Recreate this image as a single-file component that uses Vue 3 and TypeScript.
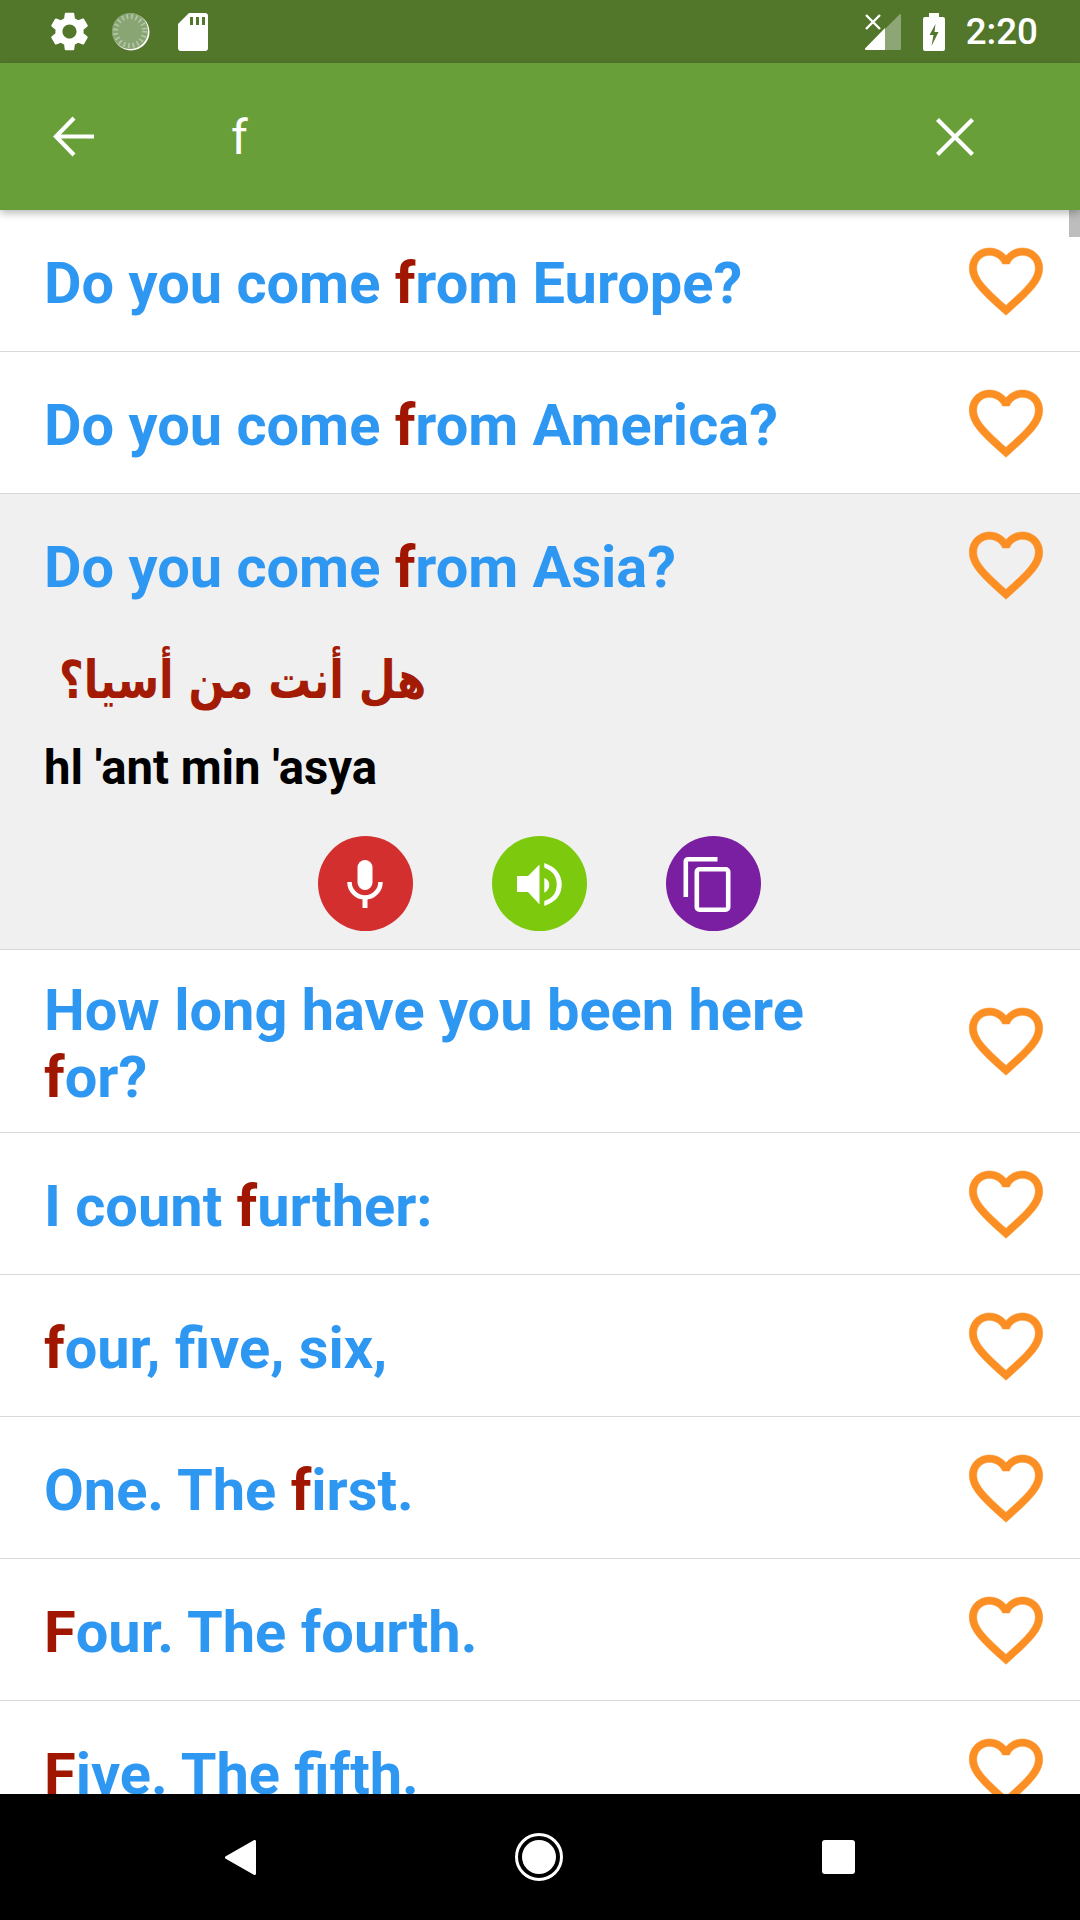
<script setup lang="ts">
interface Phrase { text: string; expanded?: boolean }
const phrases: Phrase[] = [
  { text: 'Do you come from Europe?' },
  { text: 'Do you come from America?' },
  { text: 'Do you come from Asia?', expanded: true },
  { text: 'How long have you been here for?' },
  { text: 'I count further:' },
  { text: 'four, five, six,' },
  { text: 'One. The first.' },
  { text: 'Four. The fourth.' },
  { text: 'Five. The fifth.' },
]
const query = 'f'
function split(t: string): [string, string, string] {
  const i = t.toLowerCase().indexOf(query)
  return [t.slice(0, i), t.slice(i, i + 1), t.slice(i + 1)]
}
const heart = 'M16.5 3c-1.74 0-3.41.81-4.5 2.09C10.91 3.81 9.24 3 7.5 3 4.42 3 2 5.42 2 8.5c0 3.78 3.4 6.86 8.55 11.54L12 21.35l1.45-1.32C18.6 15.36 22 12.28 22 8.5 22 5.42 19.58 3 16.5 3zm-4.4 15.55l-.1.1-.1-.1C7.14 14.24 4 11.39 4 8.5 4 6.5 5.5 5 7.5 5c1.54 0 3.04.99 3.57 2.36h1.87C13.46 5.99 14.96 5 16.5 5c2 0 3.5 1.5 3.5 3.5 0 2.89-3.14 5.74-7.9 10.05z'
</script>

<template>
  <div class="screen">
    <header class="status">
      <svg class="st gear" viewBox="0 0 24 24"><path fill="#fff" d="M19.14 12.94c.04-.3.06-.61.06-.94s-.02-.64-.07-.94l2.03-1.58a.49.49 0 0 0 .12-.61l-1.92-3.32a.488.488 0 0 0-.59-.22l-2.39.96c-.5-.38-1.03-.7-1.62-.94l-.36-2.54a.484.484 0 0 0-.48-.41h-3.84c-.24 0-.43.17-.47.41l-.36 2.54c-.59.24-1.13.57-1.62.94l-2.39-.96c-.22-.08-.47 0-.59.22L2.74 8.87c-.12.21-.08.47.12.61l2.03 1.58c-.05.3-.09.63-.09.94s.02.64.07.94l-2.03 1.58a.49.49 0 0 0-.12.61l1.92 3.32c.12.22.37.29.59.22l2.39-.96c.5.38 1.03.7 1.62.94l.36 2.54c.05.24.24.41.48.41h3.84c.24 0 .44-.17.47-.41l.36-2.54c.59-.24 1.13-.56 1.62-.94l2.39.96c.22.08.47 0 .59-.22l1.92-3.32c.12-.22.07-.47-.12-.61l-2.01-1.58zM12 15.6c-1.98 0-3.6-1.62-3.6-3.6s1.62-3.6 3.6-3.6 3.6 1.62 3.6 3.6-1.62 3.6-3.6 3.6z"/></svg>
      <svg class="st disc" viewBox="0 0 38 38">
        <circle cx="19" cy="19" r="18.500" fill="#fff" />
        <circle cx="18" cy="18" r="18" fill="#8aa574" />
        <circle cx="18" cy="18" r="14.500" fill="none" stroke="#b5c8a6" stroke-width="5" stroke-dasharray="1.6 3" />
      </svg>
      <svg class="st sd" viewBox="0 0 30 38">
        <path fill="#fff" d="M11 0h16a3 3 0 0 1 3 3v32a3 3 0 0 1-3 3H3a3 3 0 0 1-3-3V11z" />
        <path fill="#52772b" d="M12 4h3v8h-3zM18 4h3v8h-3zM24 4h3v8h-3z" />
      </svg>
      <div class="spacer"></div>
      <svg class="st signal" viewBox="0 0 36 36">
        <path fill="#fff" fill-opacity=".35" d="M35 0a1 1 0 0 1 1 1v34a1 1 0 0 1-1 1H20V15z" />
        <path fill="#fff" d="M20 14v22H1a1 1 0 0 1-1-1.500z" />
        <path stroke="#fff" stroke-width="2.400" d="M1 1l14 14M15 1L1 15" />
      </svg>
      <svg class="st batt" viewBox="0 0 22 38">
        <path fill="#fff" fill-rule="evenodd" d="M6 0h10v4h4a2 2 0 0 1 2 2v30a2 2 0 0 1-2 2H2a2 2 0 0 1-2-2V6a2 2 0 0 1 2-2h4zM12.500 11 6.500 22h4l-2 11 7-14h-4z" />
      </svg>
      <span class="time">2:20</span>
    </header>

    <div class="toolbar">
      <svg class="tb-icon back" viewBox="0 0 41 41"><path fill="none" stroke="#fff" stroke-width="4.200" d="M41 20.500H3M21 2 3 20.500 21 39" /></svg>
      <span class="query">f</span>
      <svg class="tb-icon close" viewBox="0 0 38 38"><path fill="none" stroke="#fff" stroke-width="4.200" d="M1.500 1.500l35 35M36.500 1.500l-35 35" /></svg>
    </div>

    <main class="list">
      <div class="scroll-thumb"></div>
      <section v-for="p in phrases" :key="p.text" class="row" :class="{ open: p.expanded }">
        <div class="line">
          <p class="phrase">{{ split(p.text)[0] }}<em>{{ split(p.text)[1] }}</em>{{ split(p.text)[2] }}</p>
          <svg class="heart" viewBox="0 0 24 24"><path :d="heart" /></svg>
        </div>
        <template v-if="p.expanded">
          <div class="arabic" dir="rtl">هل أنت من أسيا؟</div>
          <div class="translit">hl 'ant min 'asya</div>
          <div class="actions">
            <button class="act red">
              <svg viewBox="0 0 94 94" class="ic">
                <rect x="39.500" y="23" width="15" height="30" rx="7.500" fill="#fff" />
                <path fill="none" stroke="#fff" stroke-width="4.500" d="M31.500 45a15.500 15.500 0 0 0 31 0" />
                <rect x="44.500" y="60" width="5" height="11" fill="#fff" />
              </svg>
            </button>
            <button class="act green">
              <svg viewBox="0 0 94 94" class="ic">
                <path fill="#fff" d="M25 39h11l11.500-11.500v40L36 55H25zM52.300 26q17.400 6 17.400 21.500T52.300 69v-5q12.400-4 12.400-16.500T52.300 30.700zM52.300 41q5 2 5 7t-5 7.700z" />
              </svg>
            </button>
            <button class="act purple">
              <svg viewBox="0 0 94 94" class="ic">
                <path fill="none" stroke="#fff" stroke-width="4.600" d="M19.800 60V24.300a2 2 0 0 1 2-2H51.500" />
                <rect x="30.800" y="32.300" width="31.400" height="40.400" rx="2.500" fill="none" stroke="#fff" stroke-width="4.600" />
              </svg>
            </button>
          </div>
        </template>
      </section>
    </main>

    <nav class="navbar">
      <svg class="nv back-nav" viewBox="0 0 31 35"><path fill="#fff" stroke="#fff" stroke-width="3" stroke-linejoin="round" d="M29.500 1.500v32L1.500 17.500z" /></svg>
      <svg class="nv home" viewBox="0 0 48 48"><circle cx="24" cy="24" r="22.500" fill="none" stroke="#fff" stroke-width="3" /><circle cx="24" cy="24" r="17" fill="#fff" /></svg>
      <div class="nv square"></div>
    </nav>
  </div>
</template>

<style scoped>
.screen {
  width: 1080px;
  height: 1920px;
  display: flex;
  flex-direction: column;
  overflow: hidden;
  background: #fff;
  font-family: Roboto, "Noto Sans", sans-serif;
}
.status {
  height: 63px;
  flex: none;
  background: #52772b;
  display: flex;
  align-items: center;
  padding-left: 46px;
  padding-right: 42px;
  color: #fff;
}
.st { display: block; flex: none; }
.gear { width: 47px; height: 47px; }
.disc { width: 38px; height: 38px; margin-left: 19px; }
.sd { width: 30px; height: 38px; margin-left: 28px; }
.spacer { flex: 1; }
.signal { width: 36px; height: 36px; }
.batt { width: 22px; height: 38px; margin-left: 22px; }
.time { font-size: 36.75px; font-weight: 500; margin-left: 21px; line-height: 40px; }
.toolbar {
  position: relative;
  z-index: 2;
  height: 147px;
  flex: none;
  background: #689f38;
  box-shadow: 0 3px 8px rgba(0, 0, 0, 0.28);
  display: flex;
  align-items: center;
  color: #fff;
}
.tb-icon { display: block; flex: none; }
.back { width: 41px; height: 41px; margin-left: 53px; }
.query { font-size: 48px; line-height: 56px; margin: 2px 0 0 137px; flex: 1; }
.close { width: 38px; height: 38px; margin-right: 106px; }
.list { position: relative; flex: 1; overflow: hidden; min-height: 0; }
.scroll-thumb {
  position: absolute;
  right: 0;
  top: 0;
  width: 11px;
  height: 27px;
  background: #bdbdbd;
}
.row { border-bottom: 1px solid #d9d9d9; }
.row.open { background: #f0f0f0; padding-bottom: 18px; }
.line {
  display: flex;
  align-items: center;
  min-height: 141px;
  padding: 21px 30px 21px 44px;
  box-sizing: border-box;
}
.phrase {
  flex: 1;
  margin: 0;
  padding-top: 6px;
  padding-right: 100px;
  font-size: 57.75px;
  line-height: 67px;
  font-weight: 700;
  color: #2e97f2;
}
.phrase em { font-style: normal; color: #a01600; font-variant-ligatures: none; }
.heart { display: block; flex: none; width: 88px; height: 88px; stroke: #fb8f24; stroke-width: 0.15; }
.heart path { fill: #fb8f24; }
.arabic {
  font-family: "DejaVu Sans", sans-serif;
  font-weight: 700;
  font-size: 52px;
  line-height: 70px;
  color: #a31a05;
  width: fit-content;
  white-space: nowrap;
  margin: 10px 0 0 59px;
  transform: scaleX(0.82);
  transform-origin: left center;
}
.translit {
  font-size: 47.25px;
  font-weight: 700;
  color: #000;
  padding-left: 44px;
  line-height: 54px;
  margin-top: 26px;
}
.actions { display: flex; justify-content: center; gap: 79px; margin-top: 41px; padding-right: 2px; }
.act {
  width: 95px;
  height: 95px;
  border: 0;
  padding: 0;
  border-radius: 50%;
  display: flex;
  align-items: center;
  justify-content: center;
}
.red { background: #d32f2f; }
.green { background: #7cc90e; }
.purple { background: #7b1fa2; }
.ic { width: 94px; height: 94px; display: block; }
.navbar {
  height: 126px;
  flex: none;
  background: #000;
  display: flex;
  align-items: center;
  position: relative;
  z-index: 2;
  padding-left: 225px;
}
.nv { display: block; flex: none; }
.back-nav { width: 31px; height: 35px; }
.home { width: 48px; height: 48px; margin-left: 259px; }
.square { width: 33px; height: 34px; background: #fff; border-radius: 3px; margin-left: 259px; }
</style>
